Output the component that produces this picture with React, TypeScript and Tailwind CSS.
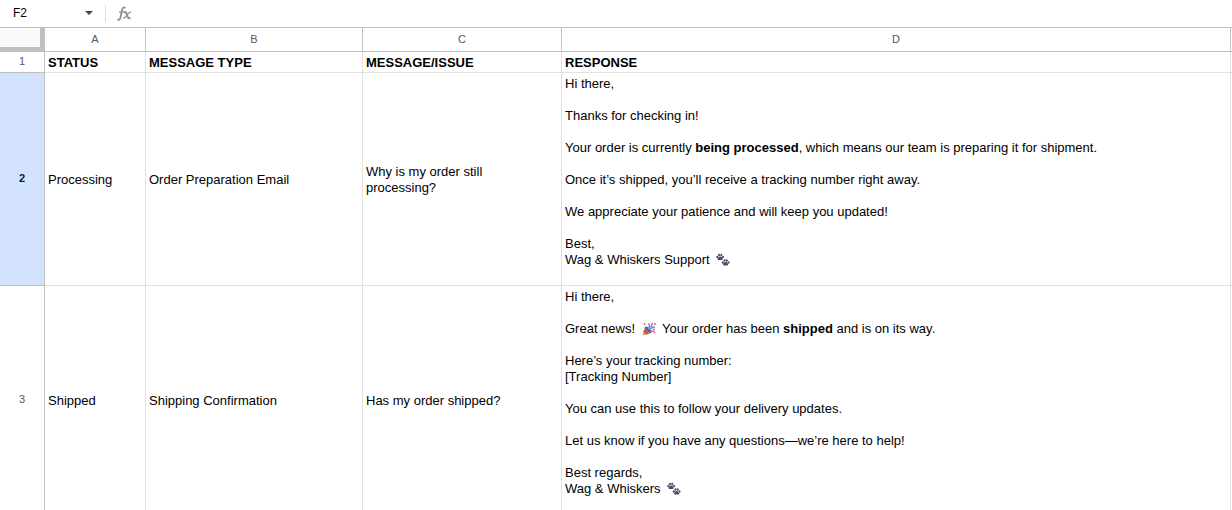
import type { ReactNode } from "react";

interface Row {
  id: number;
  status: string;
  type: string;
  issue: string;
  response: ReactNode;
  selected?: boolean;
}

function Paw() {
  return (
    <>
      <ellipse cx="2.5" cy="7" rx="2" ry="2.4" />
      <ellipse cx="6" cy="3" rx="2" ry="2.5" />
      <ellipse cx="10.5" cy="3" rx="2" ry="2.5" />
      <ellipse cx="14" cy="7" rx="2" ry="2.4" />
      <path d="M8.2 6c3 0 5 3.200 5 5s-1.800 2.600-5 1.800c-3.200.8-5 0-5-1.800s2-5 5-5z" />
    </>
  );
}

function PawPrints() {
  return (
    <svg className="mx-[3px] inline-block size-3.5 align-[-3px]" viewBox="0 0 28 28" fill="#54446a" role="img" aria-label="paw prints">
      <g transform="translate(0 1)">
        <Paw />
      </g>
      <g transform="translate(11 12)">
        <Paw />
      </g>
    </svg>
  );
}

function PartyPopper() {
  return (
    <svg className="mx-[3px] inline-block size-3.5 align-[-3px]" viewBox="0 0 28 28" role="img" aria-label="party popper">
      <path d="M1 27 6 9l13 13z" fill="#e8944a" />
      <path d="m5 14 9 10-5 1-6-5z" fill="#b9505c" />
      <ellipse cx="12.5" cy="15.5" rx="3.5" ry="8.5" transform="rotate(-45 12.5 15.5)" fill="#6b5a8c" />
      <path d="M12 14c3-3 4-7 1-11M15 16c3-5 6-6 11-6" fill="none" stroke="#4b9fe8" strokeWidth="3" />
      <path d="M17 19c3-2 6-1 9 3" fill="none" stroke="#e2609f" strokeWidth="3" />
      <path d="M17 11c3-2 2-5 4-9" fill="none" stroke="#f04fa6" strokeWidth="3" />
      <circle cx="5" cy="4" r="2" fill="#f04fa6" />
      <circle cx="26" cy="4" r="2" fill="#e04fc8" />
      <circle cx="24" cy="15" r="2" fill="#f06a3c" />
    </svg>
  );
}

const rows: Row[] = [
  {
    id: 2,
    status: "Processing",
    type: "Order Preparation Email",
    issue: "Why is my order still processing?",
    selected: true,
    response: (
      <>
        <p>Hi there,</p>
        <p>Thanks for checking in!</p>
        <p>
          Your order is currently <b>being processed</b>, which means our team is preparing it for shipment.
        </p>
        <p>Once it’s shipped, you’ll receive a tracking number right away.</p>
        <p>We appreciate your patience and will keep you updated!</p>
        <p>
          Best,
          <br />
          Wag &amp; Whiskers Support <PawPrints />
        </p>
      </>
    ),
  },
  {
    id: 3,
    status: "Shipped",
    type: "Shipping Confirmation",
    issue: "Has my order shipped?",
    response: (
      <>
        <p>Hi there,</p>
        <p>
          Great news! <PartyPopper /> Your order has been <b>shipped</b> and is on its way.
        </p>
        <p>
          Here’s your tracking number:
          <br />
          [Tracking Number]
        </p>
        <p>You can use this to follow your delivery updates.</p>
        <p>Let us know if you have any questions—we’re here to help!</p>
        <p>
          Best regards,
          <br />
          Wag &amp; Whiskers <PawPrints />
        </p>
      </>
    ),
  },
];

const columnHead = "border-r border-b border-[#c0c0c0] px-0 pt-0 pb-0.5 text-[11px] font-normal text-[#575a5a]";
const rowHead = "border-r border-b border-[#c0c0c0] px-0 pt-0 pb-0.5 text-center text-[11px]";
const cell = "border-r border-b border-[#e1e1e1] pl-[3px] pt-[3px] pb-px text-left";

export default function App() {
  return (
    <div className="h-screen overflow-hidden bg-white font-['Liberation_Sans',Arial,sans-serif] text-[13px] leading-4 text-black">
      {/* Name box and formula bar */}
      <div className="flex h-7 items-center border-b border-[#c0c0c0] pb-px">
        <input
          aria-label="Name box"
          defaultValue="F2"
          className="w-20 bg-transparent pl-[13px] text-xs text-black outline-none"
        />
        <button type="button" aria-label="Named ranges" className="flex h-5 w-[17px] items-center justify-center">
          <svg width="8" height="4" viewBox="0 0 8 4" fill="#444746">
            <path d="M0 0h8L4 4z" />
          </svg>
        </button>
        <span className="ml-2 h-[17px] w-px bg-[#dadce0]" />
        <svg className="ml-[11px]" width="15" height="15" viewBox="0 0 15 15" fill="none" stroke="#929594" aria-hidden="true">
          <path d="M.3 13.400c1.800.9 2.900-.1 3.300-2.300L5 4C5.400 1.700 6.700 1 8.600 1.700" strokeWidth="1.900" />
          <path d="M2 6h5.500" strokeWidth="1.300" />
          <path d="M7 6.200c2-.5 2.500.7 3 2.800s1.100 3.700 3.500 3" strokeWidth="2" />
          <path d="M14.200 6.200c-2-.3-3 .9-4 2.600s-1.900 3.400-4 3.200" strokeWidth="1.400" />
        </svg>
      </div>

      <table className="w-full table-fixed border-separate border-spacing-0">
        <colgroup>
          <col className="w-[45px]" />
          <col className="w-[101px]" />
          <col className="w-[217px]" />
          <col className="w-[199px]" />
          <col />
          <col className="w-px" />
        </colgroup>
        <thead>
          <tr className="h-6">
            <td className="border-r-[5px] border-b-[5px] border-[#c0c0c0] bg-[#f8f9fa] p-0" />
            <th scope="col" className={columnHead}>A</th>
            <th scope="col" className={columnHead}>B</th>
            <th scope="col" className={columnHead}>C</th>
            <th scope="col" className={columnHead}>D</th>
            <td className="border-b border-[#c0c0c0] p-0" />
          </tr>
        </thead>
        <tbody>
          <tr className="h-[21px] font-bold">
            <th scope="row" className={`${rowHead} font-normal text-[#575a5a]`}>1</th>
            <td className={`${cell} pr-[3px]`}>STATUS</td>
            <td className={`${cell} pr-[3px]`}>MESSAGE TYPE</td>
            <td className={`${cell} pr-[3px]`}>MESSAGE/ISSUE</td>
            <td className={`${cell} pr-[3px]`}>RESPONSE</td>
            <td className="border-b border-[#e1e1e1] p-0" />
          </tr>
          {rows.map((row) => (
            <tr key={row.id}>
              <th
                scope="row"
                className={`${rowHead} ${row.selected ? "bg-[#d3e3fd] font-bold text-[#041e49]" : "font-normal text-[#575a5a]"}`}
              >
                {row.id}
              </th>
              <td className={`${cell} pr-[3px]`}>{row.status}</td>
              <td className={`${cell} pr-[3px]`}>{row.type}</td>
              <td className={`${cell} pr-4`}>{row.issue}</td>
              <td className={`${cell} pr-[3px] [&>p]:mb-4`}>{row.response}</td>
              <td className="border-b border-[#e1e1e1] p-0" />
            </tr>
          ))}
        </tbody>
      </table>
    </div>
  );
}
